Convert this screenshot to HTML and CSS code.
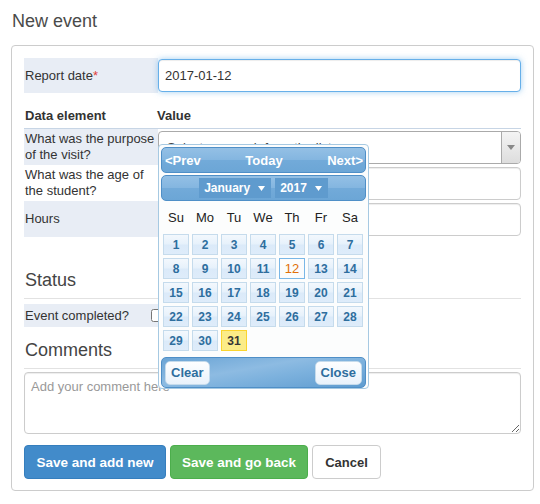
FILE: index.html
```html
<!DOCTYPE html>
<html>
<head>
<meta charset="utf-8">
<link rel="stylesheet" href="styles.css">
</head>
<body>
<div class="page">
  <h1 class="title">New event</h1>
  <div class="panel">
    <div class="row report">
      <div class="label shaded">Report date<span class="req">*</span></div>
      <div class="value"><input class="input focus" type="text" value="2017-01-12"></div>
    </div>
    <div class="thead">
      <div class="th-label">Data element</div>
      <div class="th-value">Value</div>
    </div>
    <div class="row data">
      <div class="label shaded">What was the purpose<br>of the visit?</div>
      <div class="value">
        <div class="select">
          <span class="select-text">Select or search from the list</span>
          <span class="select-arrow"><svg width="8" height="5" viewBox="0 0 8 5"><path d="M0 0h8L4 5z" fill="#888"/></svg></span>
        </div>
      </div>
    </div>
    <div class="row data">
      <div class="label">What was the age of<br>the student?</div>
      <div class="value"><input class="input" type="text"></div>
    </div>
    <div class="row data">
      <div class="label shaded">Hours</div>
      <div class="value"><input class="input" type="text"></div>
    </div>

    <h2 class="section">Status</h2>
    <div class="row status">
      <div class="label shaded status-label">Event completed?<input class="check" type="checkbox"></div>
    </div>

    <h2 class="section comments">Comments</h2>
    <textarea class="textarea" placeholder="Add your comment here"></textarea>

    <div class="actions">
      <button class="btn btn-blue">Save and add new</button>
      <button class="btn btn-green">Save and go back</button>
      <button class="btn btn-white">Cancel</button>
    </div>
  </div>

  <div class="datepicker">
    <div class="bar nav">
      <span>&lt;Prev</span>
      <span>Today</span>
      <span>Next&gt;</span>
    </div>
    <div class="bar sel">
      <span class="dd">January <svg width="7" height="5" viewBox="0 0 7 5"><path d="M0 0h7L3.5 5z" fill="#fff"/></svg></span>
      <span class="dd">2017 <svg width="7" height="5" viewBox="0 0 7 5"><path d="M0 0h7L3.5 5z" fill="#fff"/></svg></span>
    </div>
    <div class="days-head">
      <span>Su</span><span>Mo</span><span>Tu</span><span>We</span><span>Th</span><span>Fr</span><span>Sa</span>
    </div>
    <div class="days">
      <span class="d">1</span><span class="d">2</span><span class="d">3</span><span class="d">4</span><span class="d">5</span><span class="d">6</span><span class="d">7</span>
      <span class="d">8</span><span class="d">9</span><span class="d">10</span><span class="d">11</span><span class="d today">12</span><span class="d">13</span><span class="d">14</span>
      <span class="d">15</span><span class="d">16</span><span class="d">17</span><span class="d">18</span><span class="d">19</span><span class="d">20</span><span class="d">21</span>
      <span class="d">22</span><span class="d">23</span><span class="d">24</span><span class="d">25</span><span class="d">26</span><span class="d">27</span><span class="d">28</span>
      <span class="d">29</span><span class="d">30</span><span class="d hl">31</span>
    </div>
    <div class="bar foot">
      <span class="fbtn">Clear</span>
      <span class="fbtn">Close</span>
    </div>
  </div>
</div>
</body>
</html>
```

FILE: styles.css
```css
* { box-sizing: border-box; }
html, body { margin: 0; padding: 0; background: #fff; }
body {
  font-family: "Liberation Sans", Arial, sans-serif;
  font-size: 13px;
  color: #333;
}
.page { position: relative; width: 540px; height: 504px; }
.title {
  margin: 0 0 0 12px;
  padding-top: 11px;
  font-size: 18px;
  line-height: 20px;
  font-weight: normal;
  color: #4a4a4a;
}
.panel {
  margin: 14px 0 0 11px;
  width: 523px;
  border: 1px solid #ccc;
  border-radius: 4px;
  padding: 12px 12px 11px 12px;
}
.row { display: flex; }
.label {
  width: 134px;
  flex: none;
  display: flex;
  align-items: center;
  padding: 0 1px;
  line-height: 16px;
  color: #333;
}
.shaded { background: #e8edf5; }
.req { color: #e0403a; }
.value { flex: 1; display: flex; align-items: center; }
.report { height: 35px; }
.report .value { align-items: flex-start; padding-top: 1px; }
.input {
  width: 100%;
  height: 33px;
  border: 1px solid #ccc;
  border-radius: 4px;
  padding: 0 6px;
  font-family: inherit;
  font-size: 13px;
  color: #333;
  box-shadow: inset 0 1px 1px rgba(0,0,0,.075);
  outline: none;
}
.focus {
  border-color: #66afe9;
  box-shadow: inset 0 1px 1px rgba(0,0,0,.075), 0 0 6px rgba(102,175,233,.6);
}
.thead {
  display: flex;
  padding: 15px 0 4px;
  line-height: 16px;
  font-weight: bold;
  border-bottom: 1px solid #c7d5e5;
  color: #333;
}
.th-label { width: 133px; padding-left: 1px; }
.data { height: 36px; }
.select {
  width: 100%;
  height: 33px;
  border: 1px solid #aaa;
  border-radius: 4px;
  display: flex;
  align-items: center;
  background: #fff;
  overflow: hidden;
}
.select-text { flex: 1; padding-left: 8px; color: #444; }
.select-arrow {
  width: 19px;
  height: 100%;
  border-left: 1px solid #aaa;
  background: linear-gradient(#f4f4f4, #ddd);
  display: flex;
  align-items: center;
  justify-content: center;
}
.section {
  margin: 33px 0 0;
  padding: 0 0 8px 1px;
  font-size: 18px;
  line-height: 20px;
  font-weight: normal;
  color: #444;
  border-bottom: 1px solid #e2e2e2;
}
.status { margin-top: 5px; height: 23px; }
.status-label { justify-content: space-between; width: 134px; }
.check { width: 13px; height: 13px; margin: 0 -7px 0 0; }
.comments { margin-top: 13px; }
.textarea {
  display: block;
  margin-top: 3px;
  width: 100%;
  height: 62px;
  border: 1px solid #ccc;
  border-radius: 4px;
  padding: 6px 6px;
  font-family: inherit;
  font-size: 13px;
  color: #333;
  box-shadow: inset 0 1px 1px rgba(0,0,0,.075);
  resize: vertical;
}
.textarea::placeholder { color: #999; }
.actions { display: flex; gap: 4px; margin-top: 11px; }
.btn {
  height: 34px;
  padding: 0 8px;
  border-radius: 4px;
  border: 1px solid transparent;
  font-family: inherit;
  font-size: 13px;
  font-weight: bold;
  color: #fff;
}
.btn-blue { background: #428bca; border-color: #357ebd; width: 142px; font-size: 13.5px; }
.btn-green { background: #5cb85c; border-color: #4cae4c; width: 138px; font-size: 13.5px; }
.btn-white { background: #fff; border-color: #ccc; color: #333; width: 69px; }

/* datepicker */
.datepicker {
  position: absolute;
  left: 158px;
  top: 144px;
  width: 211px;
  height: 245px;
  border: 1px solid #a6c9e2;
  border-radius: 4px;
  background: #fcfdfd;
  padding: 2px 2px 0;
}
.bar {
  height: 26px;
  border: 1px solid #4f8fc7;
  border-radius: 5px;
  background: linear-gradient(#94c0e5 0%, #84b6e0 48%, #72aad9 52%, #6ca6d6 100%);
  color: #fff;
  font-weight: bold;
  font-size: 13px;
  display: flex;
  align-items: center;
}
.nav { justify-content: space-between; padding: 0 2px 0 3px; }
.sel { margin-top: 2px; justify-content: center; gap: 4px; }
.dd {
  height: 20px;
  background: #5f9bce;
  display: flex;
  align-items: center;
  gap: 8px;
  padding: 0 6px 0 5px;
  font-size: 12px;
  white-space: nowrap;
}
.days-head {
  display: grid;
  grid-template-columns: repeat(7, 26px);
  column-gap: 3px;
  padding-left: 2px;
  margin-top: 9px;
  line-height: 16px;
  font-size: 13px;
  color: #222;
  text-align: center;
}
.days {
  display: grid;
  grid-template-columns: repeat(7, 26px);
  grid-auto-rows: 21px;
  column-gap: 3px;
  row-gap: 3px;
  padding-left: 2px;
  margin-top: 8px;
}
.d {
  border: 1px solid #c5dbec;
  background: linear-gradient(#f3f8fd 0%, #e6f1fb 48%, #dbeaf9 52%, #deecfa 100%);
  color: #2e6e9e;
  font-weight: bold;
  font-size: 12px;
  display: flex;
  align-items: center;
  justify-content: center;
}
.d.today { background: #fbfcfd; border-color: #79b7e7; color: #e17009; font-weight: normal; font-size: 13px; }
.d.hl { background: #fbec88; border-color: #fad42e; color: #363636; }
.foot {
  margin-top: 6px;
  height: 31px;
  justify-content: space-between;
  padding: 0 3px;
  background: linear-gradient(170deg, #6aa4d5 0%, #8dbbe2 40%, #7cb1dd 60%, #5f9cd0 100%);
}
.fbtn {
  height: 24px;
  border: 1px solid #c5dbec;
  border-radius: 5px;
  background: linear-gradient(#fdfeff, #e9f2fb);
  color: #2e6e9e;
  font-weight: bold;
  font-size: 13px;
  display: flex;
  align-items: center;
  padding: 0 5px;
}
```
